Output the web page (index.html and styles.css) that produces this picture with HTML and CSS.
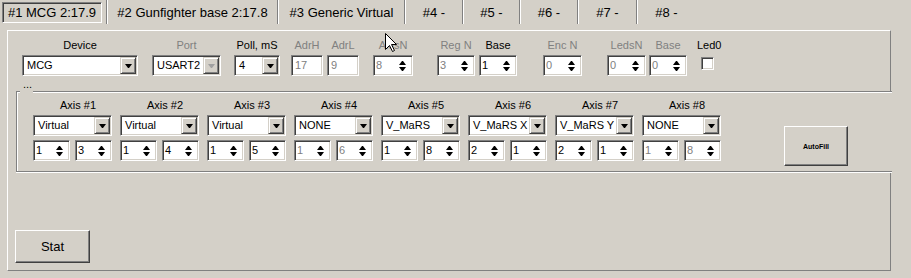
FILE: index.html
```html
<!DOCTYPE html>
<html lang="en">
<head>
    <meta charset="UTF-8">
    <title>Device setup</title>
    <link rel="stylesheet" href="styles.css">
</head>
<body>
<div class="tabs">
    <div class="tab active tab1">#1 MCG 2:17.9</div>
    <div class="sep"></div>
    <div class="tab tab2">#2 Gunfighter base 2:17.8</div>
    <div class="sep"></div>
    <div class="tab tab3">#3 Generic Virtual</div>
    <div class="sep"></div>
    <div class="tab tab4">#4 -</div>
    <div class="sep"></div>
    <div class="tab tab5">#5 -</div>
    <div class="sep"></div>
    <div class="tab tab6">#6 -</div>
    <div class="sep"></div>
    <div class="tab tab7">#7 -</div>
    <div class="sep"></div>
    <div class="tab tab8">#8 -</div>
</div>

<div class="panel">
    <div class="top">
        <div class="field device">
            <div class="label">Device</div>
            <div class="combo"><span class="text">MCG</span><span class="btn"></span></div>
        </div>
        <div class="field port">
            <div class="label off">Port</div>
            <div class="combo"><span class="text">USART2</span><span class="btn off"></span></div>
        </div>
        <div class="field poll">
            <div class="label">Poll, mS</div>
            <div class="combo"><span class="text">4</span><span class="btn"></span></div>
        </div>
        <div class="field adrh">
            <div class="label off">AdrH</div>
            <div class="edit off">17</div>
        </div>
        <div class="field adrl">
            <div class="label off">AdrL</div>
            <div class="edit off">9</div>
        </div>
        <div class="field axisn">
            <div class="label off">AxisN</div>
            <div class="spin off"><span class="val">8</span><span class="arrows"></span></div>
        </div>
        <div class="field regn">
            <div class="label off">Reg N</div>
            <div class="spin off"><span class="val">3</span><span class="arrows"></span></div>
        </div>
        <div class="field base">
            <div class="label">Base</div>
            <div class="spin"><span class="val">1</span><span class="arrows"></span></div>
        </div>
        <div class="field encn">
            <div class="label off">Enc N</div>
            <div class="spin off"><span class="val">0</span><span class="arrows"></span></div>
        </div>
        <div class="field ledsn">
            <div class="label off">LedsN</div>
            <div class="spin off"><span class="val">0</span><span class="arrows"></span></div>
        </div>
        <div class="field ledbase">
            <div class="label off">Base</div>
            <div class="spin off"><span class="val">0</span><span class="arrows"></span></div>
        </div>
        <div class="field led0">
            <div class="label">Led0</div>
            <div class="check"></div>
        </div>
    </div>

    <div class="group">
        <span class="caption">...</span>

        <div class="axis">
            <div class="label">Axis #1</div>
            <div class="combo"><span class="text">Virtual</span><span class="btn"></span></div>
            <div class="pair">
                <div class="spin"><span class="val">1</span><span class="arrows"></span></div>
                <div class="spin"><span class="val">3</span><span class="arrows"></span></div>
            </div>
        </div>
        <div class="axis">
            <div class="label">Axis #2</div>
            <div class="combo"><span class="text">Virtual</span><span class="btn"></span></div>
            <div class="pair">
                <div class="spin"><span class="val">1</span><span class="arrows"></span></div>
                <div class="spin"><span class="val">4</span><span class="arrows"></span></div>
            </div>
        </div>
        <div class="axis">
            <div class="label">Axis #3</div>
            <div class="combo"><span class="text">Virtual</span><span class="btn"></span></div>
            <div class="pair">
                <div class="spin"><span class="val">1</span><span class="arrows"></span></div>
                <div class="spin"><span class="val">5</span><span class="arrows"></span></div>
            </div>
        </div>
        <div class="axis">
            <div class="label">Axis #4</div>
            <div class="combo"><span class="text">NONE</span><span class="btn"></span></div>
            <div class="pair">
                <div class="spin off"><span class="val">1</span><span class="arrows"></span></div>
                <div class="spin off"><span class="val">6</span><span class="arrows"></span></div>
            </div>
        </div>
        <div class="axis">
            <div class="label">Axis #5</div>
            <div class="combo"><span class="text">V_MaRS</span><span class="btn"></span></div>
            <div class="pair">
                <div class="spin"><span class="val">1</span><span class="arrows"></span></div>
                <div class="spin"><span class="val">8</span><span class="arrows"></span></div>
            </div>
        </div>
        <div class="axis">
            <div class="label">Axis #6</div>
            <div class="combo"><span class="text">V_MaRS X</span><span class="btn"></span></div>
            <div class="pair">
                <div class="spin"><span class="val">2</span><span class="arrows"></span></div>
                <div class="spin"><span class="val">1</span><span class="arrows"></span></div>
            </div>
        </div>
        <div class="axis">
            <div class="label">Axis #7</div>
            <div class="combo"><span class="text">V_MaRS Y</span><span class="btn"></span></div>
            <div class="pair">
                <div class="spin"><span class="val">2</span><span class="arrows"></span></div>
                <div class="spin"><span class="val">1</span><span class="arrows"></span></div>
            </div>
        </div>
        <div class="axis">
            <div class="label">Axis #8</div>
            <div class="combo"><span class="text">NONE</span><span class="btn"></span></div>
            <div class="pair">
                <div class="spin off"><span class="val">1</span><span class="arrows"></span></div>
                <div class="spin off"><span class="val">8</span><span class="arrows"></span></div>
            </div>
        </div>

        <button class="button autofill">AutoFill</button>
    </div>

    <button class="button stat">Stat</button>
</div>

<!-- mouse pointer left in the capture -->
<svg class="cursor" width="13" height="20" viewBox="0 0 13 20">
    <path d="M0.5 0.5 L0.5 16.5 L4.5 12.5 L7.5 18.5 L9.5 17.5 L6.5 11.5 L11.5 11.5 Z" fill="#fff" stroke="#000" stroke-width="1"/>
</svg>
</body>
</html>
```

FILE: styles.css
```css
body {
    margin: 0;
    width: 911px;
    height: 278px;
    overflow: hidden;
    background-color: #d4d0c8;
    font-family: "Liberation Sans", Arial, sans-serif;
    font-size: 11px;
    color: #000;
    position: relative;
}

/* tab strip */
.tabs {
    display: flex;
    height: 24px;
}
.tab {
    display: flex;
    align-items: center;
    justify-content: center;
    height: 24px;
    font-size: 13px;
    white-space: nowrap;
    box-sizing: border-box;
}
.tab.active {
    margin: 2px 4px 0 2px;
    height: 21px;
    border: 1px solid;
    border-color: #808080 #fff #fff #808080;
    box-shadow: inset 1px 1px 0 #404040;
}
.tab1 { width: 100px; }
.tab2 { width: 169px; }
.tab3 { width: 125px; }
.tab4 { width: 56px; }
.tab5 { width: 55px; }
.tab6 { width: 56px; }
.tab7 { width: 57px; }
.tab8 { width: 57px; }
.sep {
    width: 1px;
    height: 24px;
    background-color: #808080;
    border-right: 1px solid #fff;
}

/* main page */
.panel {
    margin: 6px 0 0 7px;
    width: 884px;
    height: 241px;
    box-sizing: border-box;
    border-top: 1px solid #fff;
    border-left: 1px solid #fff;
    border-right: 1px solid #808080;
    border-bottom: 1px solid #808080;
}
.top {
    display: flex;
    height: 60px;
    padding-top: 7px;
    box-sizing: border-box;
}
.field {
    display: flex;
    flex-direction: column;
}
.label {
    height: 14px;
    line-height: 14px;
    text-align: center;
    white-space: nowrap;
    margin-bottom: 3px;
}
.off {
    color: #808080;
}

.device { width: 116px; margin-left: 14px; }
.port { width: 69px; margin-left: 14px; }
.poll { width: 46px; margin-left: 13px; }
.adrh { width: 32px; margin-left: 11px; }
.adrl { width: 32px; margin-left: 4px; }
.axisn { width: 40px; margin-left: 14px; }
.regn { width: 38px; margin-left: 24px; }
.base { width: 38px; margin-left: 4px; }
.encn { width: 39px; margin-left: 26px; }
.ledsn { width: 39px; margin-left: 25px; }
.ledbase { width: 38px; margin-left: 3px; }
.led0 { width: 24px; margin-left: 10px; }

/* sunken controls */
.combo, .edit, .spin, .check {
    box-sizing: border-box;
    border: 1px solid;
    border-color: #808080 #fff #fff #808080;
    box-shadow: inset 1px 1px 0 #404040, inset -1px -1px 0 #d4d0c8;
    background-color: #fff;
}
.combo {
    display: flex;
    height: 21px;
    padding: 1px;
}
.combo .text {
    flex: 1;
    padding-left: 3px;
    line-height: 17px;
    white-space: nowrap;
    overflow: hidden;
}
.combo .btn {
    display: flex;
    align-items: center;
    justify-content: center;
    width: 16px;
    height: 17px;
    box-sizing: border-box;
    background-color: #d4d0c8;
    border: 1px solid;
    border-color: #d4d0c8 #404040 #404040 #d4d0c8;
    box-shadow: inset 1px 1px 0 #fff, inset -1px -1px 0 #808080;
}
.combo .btn::after {
    content: "";
    width: 1px;
    border-left: 3px solid transparent;
    border-right: 3px solid transparent;
    border-top: 4px solid #000;
}
.combo .btn.off::after {
    border-top-color: #a0a0a0;
}
.edit {
    height: 21px;
    padding: 1px 0 0 3px;
    line-height: 17px;
}
.spin {
    display: flex;
    height: 21px;
    padding: 1px;
}
.spin .val {
    flex: 1;
    padding-left: 1px;
    line-height: 17px;
}
.spin .arrows {
    display: flex;
    flex-direction: column;
    justify-content: center;
    gap: 2px;
    width: 7px;
    margin-right: 5px;
}
.spin .arrows::before,
.spin .arrows::after {
    content: "";
    width: 1px;
    border-left: 3px solid transparent;
    border-right: 3px solid transparent;
}
.spin .arrows::before {
    border-bottom: 4px solid #000;
}
.spin .arrows::after {
    border-top: 4px solid #000;
}
.check {
    width: 13px;
    height: 13px;
    margin: 2px 0 0 4px;
}

/* axis group */
.group {
    position: relative;
    display: flex;
    gap: 8px;
    height: 81px;
    margin: 0 -2px 0 8px;
    padding: 6px 0 0 16px;
    box-sizing: border-box;
    background-color: #d4d0c8;
    border: 1px solid #808080;
    border-right: none;
    box-shadow: inset 1px 1px 0 #fff, 0 1px 0 #fff;
}
.caption {
    position: absolute;
    left: 3px;
    top: -15px;
    height: 17px;
    line-height: 14px;
    padding: 0 1px 0 3px;
    background-color: #d4d0c8;
}
.axis {
    display: flex;
    flex-direction: column;
    width: 79px;
}
.axis .label {
    padding-left: 11px;
}
.pair {
    display: flex;
    justify-content: space-between;
    margin-top: 4px;
}
.pair .spin {
    width: 37px;
}

/* raised buttons */
.button {
    display: block;
    padding: 0;
    box-sizing: border-box;
    background-color: #d4d0c8;
    border: 1px solid;
    border-color: #fff #404040 #404040 #fff;
    box-shadow: inset -1px -1px 0 #808080;
    font-family: "Liberation Sans", Arial, sans-serif;
    color: #000;
}
.autofill {
    width: 64px;
    height: 40px;
    margin: 28px 0 0 55px;
    font-size: 7px;
    font-weight: bold;
}
.stat {
    width: 75px;
    height: 33px;
    margin: 58px 0 0 7px;
    font-size: 13px;
}

.cursor {
    position: absolute;
    left: 385px;
    top: 33px;
}
```
